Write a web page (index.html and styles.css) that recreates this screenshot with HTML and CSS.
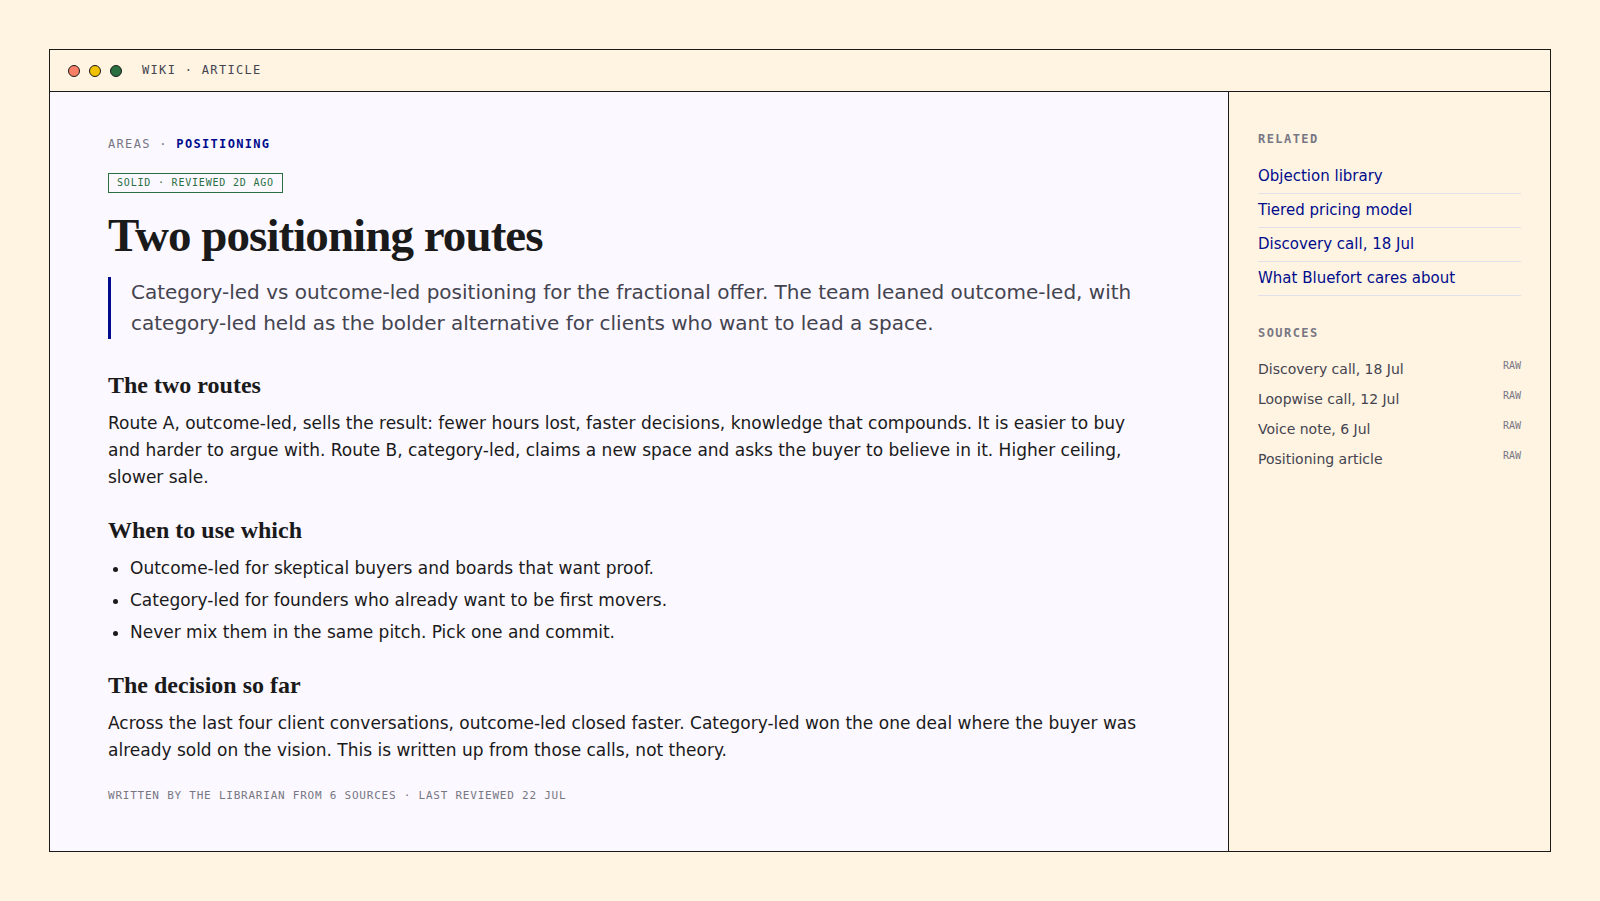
FILE: index.html
```
<!DOCTYPE html>
<html lang="en">
<head>
    <meta charset="UTF-8">
    <meta name="viewport" content="width=device-width, initial-scale=1.0">
    <title>Two positioning routes</title>
    <link rel="stylesheet" href="styles.css">
</head>
<body>
    <div class="window">
        <header class="titlebar">
            <span class="dots">
                <span class="dot dot-red"></span>
                <span class="dot dot-yellow"></span>
                <span class="dot dot-green"></span>
            </span>
            <span class="titlebar-label">WIKI · ARTICLE</span>
        </header>

        <div class="content">
            <main class="article">
                <nav class="crumbs">AREAS · <strong>POSITIONING</strong></nav>
                <span class="badge">SOLID · REVIEWED 2D AGO</span>
                <h1>Two positioning routes</h1>
                <p class="lead">Category-led vs outcome-led positioning for the fractional offer. The team leaned outcome-led, with category-led held as the bolder alternative for clients who want to lead a space.</p>

                <h2>The two routes</h2>
                <p>Route A, outcome-led, sells the result: fewer hours lost, faster decisions, knowledge that compounds. It is easier to buy and harder to argue with. Route B, category-led, claims a new space and asks the buyer to believe in it. Higher ceiling, slower sale.</p>

                <h2>When to use which</h2>
                <ul>
                    <li>Outcome-led for skeptical buyers and boards that want proof.</li>
                    <li>Category-led for founders who already want to be first movers.</li>
                    <li>Never mix them in the same pitch. Pick one and commit.</li>
                </ul>

                <h2>The decision so far</h2>
                <p>Across the last four client conversations, outcome-led closed faster. Category-led won the one deal where the buyer was already sold on the vision. This is written up from those calls, not theory.</p>

                <footer class="meta">WRITTEN BY THE LIBRARIAN FROM 6 SOURCES · LAST REVIEWED 22 JUL</footer>
            </main>

            <aside class="sidebar">
                <h3>RELATED</h3>
                <nav class="related">
                    <a href="#">Objection library</a>
                    <a href="#">Tiered pricing model</a>
                    <a href="#">Discovery call, 18 Jul</a>
                    <a href="#">What Bluefort cares about</a>
                </nav>

                <h3>SOURCES</h3>
                <ul class="sources">
                    <li>Discovery call, 18 Jul <span class="raw">RAW</span></li>
                    <li>Loopwise call, 12 Jul <span class="raw">RAW</span></li>
                    <li>Voice note, 6 Jul <span class="raw">RAW</span></li>
                    <li>Positioning article <span class="raw">RAW</span></li>
                </ul>
            </aside>
        </div>
    </div>
</body>
</html>
```

FILE: styles.css
```
* {
    box-sizing: border-box;
}
body {
    margin: 0;
    padding: 49px;
    min-height: 100vh;
    display: flex;
    background-color: #fff3e2;
    color: #1a1a1a;
    font-family: "DejaVu Sans", sans-serif;
}
.window {
    flex: 1;
    display: flex;
    flex-direction: column;
    border: 1px solid #1a1a1a;
}

/* Title bar */
.titlebar {
    display: flex;
    align-items: center;
    gap: 20px;
    padding: 13px 18px;
    border-bottom: 1px solid #1a1a1a;
}
.dots {
    display: flex;
    gap: 9px;
}
.dot {
    width: 12px;
    height: 12px;
    border: 1px solid #1a1a1a;
    border-radius: 50%;
}
.dot-red {
    background-color: #fa7f66;
}
.dot-yellow {
    background-color: #f2c200;
}
.dot-green {
    background-color: #2a6f3f;
}
.titlebar-label,
.crumbs,
.badge,
.meta,
.sidebar h3,
.raw {
    font-family: "DejaVu Sans Mono", monospace;
}
.titlebar-label {
    font-size: 12px;
    line-height: 15px;
    letter-spacing: 0.11em;
    color: #44444f;
}

/* Article */
.content {
    flex: 1;
    display: flex;
}
.article {
    flex: 1;
    padding: 44px 58px;
    background-color: #fbf8ff;
}
.crumbs {
    margin-bottom: 20px;
    font-size: 12px;
    line-height: 17px;
    letter-spacing: 0.11em;
    color: #777783;
}
.crumbs strong {
    color: #000c8c;
}
.badge {
    display: block;
    width: fit-content;
    padding: 3px 8px;
    border: 1px solid #2a6f3f;
    font-size: 10px;
    line-height: 12px;
    letter-spacing: 0.08em;
    color: #2a6f3f;
}
h1,
h2 {
    font-family: "Liberation Serif", serif;
    font-weight: bold;
}
h1 {
    margin: 16px 0;
    font-size: 47px;
    line-height: 52px;
    letter-spacing: -0.02em;
}
h2 {
    margin: 25px 0 11px;
    font-size: 24px;
    line-height: 28px;
}
p {
    margin: 0;
    max-width: 1032px;
    font-size: 17px;
    line-height: 27px;
}
.lead {
    margin-bottom: 32px;
    padding-left: 20px;
    border-left: 3px solid #000c8c;
    font-size: 20px;
    line-height: 31px;
    color: #44444f;
}
.article ul {
    margin: 0;
    padding-left: 22px;
    font-size: 17px;
    line-height: 27px;
}
.article li + li {
    margin-top: 5px;
}
.meta {
    margin-top: 25px;
    font-size: 11px;
    line-height: 13px;
    letter-spacing: 0.07em;
    color: #777783;
}

/* Sidebar */
.sidebar {
    flex: 0 0 322px;
    padding: 40px 29px;
    border-left: 1px solid #1a1a1a;
}
.sidebar h3 {
    margin: 0 0 14px;
    font-size: 12px;
    line-height: 14px;
    letter-spacing: 0.12em;
    color: #777783;
}
.related {
    margin-bottom: 30px;
}
.related a {
    display: block;
    padding: 8px 0;
    border-bottom: 1px solid #e0e0ea;
    font-size: 15px;
    line-height: 17px;
    color: #000c8c;
    text-decoration: none;
}
.sources {
    margin: 0;
    padding: 0;
    list-style: none;
}
.sources li {
    display: flex;
    justify-content: space-between;
    padding: 6px 0;
    font-size: 14px;
    line-height: 18px;
    color: #44444f;
}
.raw {
    font-size: 10px;
    line-height: 12px;
    color: #777783;
}
```
